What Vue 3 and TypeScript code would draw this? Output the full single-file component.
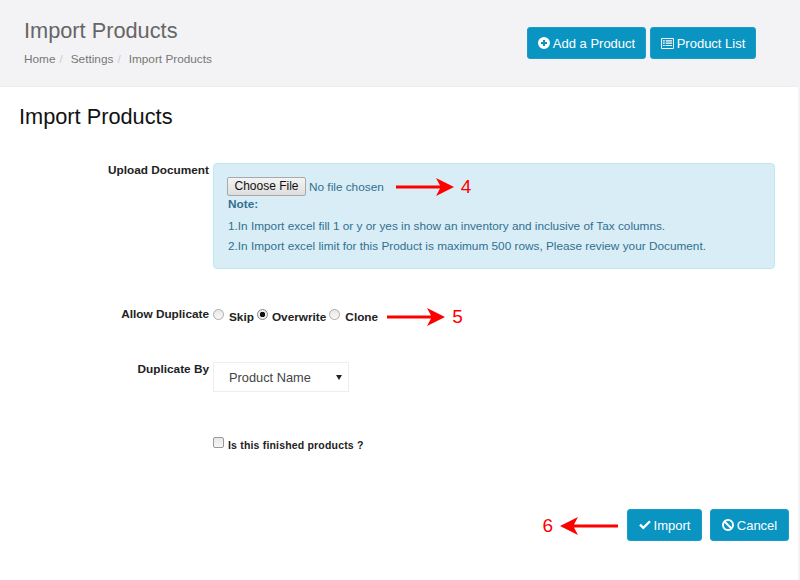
<script setup lang="ts">
const crumbs: string[] = ['Home', 'Settings', 'Import Products']
const options = [
  { label: 'Skip', checked: false },
  { label: 'Overwrite', checked: true },
  { label: 'Clone', checked: false },
]
</script>

<template>
  <div class="page">
    <header class="top">
      <div class="top-left">
        <h1>Import Products</h1>
        <nav class="crumbs">
          <span v-for="(c, i) in crumbs" :key="c" class="crumb">
            {{ c }}<i v-if="i < crumbs.length - 1" class="sep">/</i>
          </span>
        </nav>
      </div>
      <div class="top-actions">
        <button class="btn add">
          <svg viewBox="0 0 12 12" width="12" height="12"><path fill="#fff" fill-rule="evenodd" d="M6 0a6 6 0 1 1 0 12A6 6 0 0 1 6 0zM5 3v2H3v2h2v2h2V7h2V5H7V3z"/></svg>
          Add a Product
        </button>
        <button class="btn list">
          <svg viewBox="0 0 14 12" width="13" height="11"><path fill="#fff" fill-rule="evenodd" d="M1 0h12a1 1 0 0 1 1 1v10a1 1 0 0 1-1 1H1a1 1 0 0 1-1-1V1a1 1 0 0 1 1-1zm0 1.200v9.600h12V1.200zM2 2.500h2v1.300H2zm3 0h7v1.300H5zM2 5h2v1.300H2zm3 0h7v1.300H5zM2 7.500h2v1.300H2zm3 0h7v1.300H5z"/></svg>
          Product List
        </button>
      </div>
    </header>

    <main class="panel">
      <h2>Import Products</h2>

      <div class="row upload-row">
        <label class="lbl">Upload Document</label>
        <div class="alert">
          <div class="file">
            <span class="file-btn">Choose File</span>
            <span class="file-txt">No file chosen</span>
            <svg class="arrow a4" viewBox="0 0 58 20" width="58" height="20"><path fill="#f00" d="M0 8.500h44L40 1l18 9-18 9 4-7.500H0z"/></svg>
            <span class="num">4</span>
          </div>
          <div class="note">Note:</div>
          <p>1.In Import excel fill 1 or y or yes in show an inventory and inclusive of Tax columns.</p>
          <p>2.In Import excel limit for this Product is maximum 500 rows, Please review your Document.</p>
        </div>
      </div>

      <div class="row dup-row">
        <label class="lbl">Allow Duplicate</label>
        <div class="radios">
          <span v-for="o in options" :key="o.label" class="radio-item">
            <span class="radio" :class="{ on: o.checked }"></span>
            <b>{{ o.label }}</b>
          </span>
          <svg class="arrow a5" viewBox="0 0 58 20" width="58" height="20"><path fill="#f00" d="M0 8.500h44L40 1l18 9-18 9 4-7.500H0z"/></svg>
          <span class="num n5">5</span>
        </div>
      </div>

      <div class="row by-row">
        <label class="lbl">Duplicate By</label>
        <div class="select"><span class="sel-txt">Product Name</span><span class="caret"></span></div>
      </div>

      <div class="row check-row">
        <span></span>
        <div class="check-wrap"><span class="check"></span><b>Is this finished products ?</b></div>
      </div>

      <footer class="foot">
        <span class="num n6">6</span>
        <svg class="arrow a6" viewBox="0 0 58 20" width="58" height="20"><path fill="#f00" d="M58 8.500H14L18 1 0 10l18 9-4-7.500h44z"/></svg>
        <button class="btn import">
          <svg viewBox="0 0 14 12" width="12" height="10"><path fill="#fff" d="M5 11.500 0 6.500 2 4.500 5 7.500 12 .5l2 2z"/></svg>
          Import
        </button>
        <button class="btn cancel">
          <svg viewBox="0 0 12 12" width="12" height="12"><circle cx="6" cy="6" r="5" fill="none" stroke="#fff" stroke-width="2"/><path stroke="#fff" stroke-width="2" d="M2.500 2.500l7 7"/></svg>
          Cancel
        </button>
      </footer>
    </main>
  </div>
</template>

<style>
html, body { margin: 0; background: #f3f3f5; }
</style>

<style scoped>
.page { width: 800px; height: 580px; overflow: hidden; font-family: "Liberation Sans", Arial, sans-serif; color: #333; }
.top { height: 86px; box-sizing: border-box; display: flex; justify-content: space-between; padding: 27px 44px 0 24px; background: #f3f3f5; }
.top-left { margin-top: -9px; }
h1 { margin: 0; font-size: 21.750px; line-height: 26px; font-weight: 400; color: #666; }
.crumbs { margin-top: 8px; font-size: 11.800px; line-height: 14px; color: #777; display: flex; }
.crumb { margin-right: 8px; }
.sep { font-style: normal; color: #ccc; margin-left: 4px; }
.top-actions { display: flex; gap: 4px; align-items: flex-start; }
.btn { box-sizing: border-box; height: 32px; background: #0a94c2; border: 1px solid #1a9cc8; border-radius: 3px; color: #fff; font: 13px "Liberation Sans", Arial, sans-serif; display: inline-flex; align-items: center; justify-content: center; gap: 3px; padding: 0; }
.add { width: 119px; }
.list { width: 106px; }
.import { width: 75px; }
.cancel { width: 79px; margin-left: 8px; }
.panel { width: 798px; height: 494px; background: #fff; box-sizing: border-box; padding: 17px 9px 0 19px; border-top: 1px solid #eee; }
h2 { margin: 0; font-size: 21.750px; line-height: 26px; font-weight: 400; color: #111; }
.row { display: grid; grid-template-columns: 190px 1fr; column-gap: 4px; }
.lbl { font-size: 11.800px; font-weight: 700; color: #222; text-align: right; line-height: 14px; }
.upload-row { margin-top: 33px; }
.alert { width: 562px; height: 106px; box-sizing: border-box; background: #d9edf7; border: 1px solid #bce8f1; border-radius: 4px; padding: 13px 14px 0; color: #31708f; font-size: 11.800px; }
.file { display: flex; align-items: center; height: 19px; }
.file-btn { box-sizing: border-box; width: 79px; height: 19px; margin-left: -1px; background: linear-gradient(#f4f4f4, #dedede); border: 1px solid #a9a9a9; border-radius: 2px; color: #111; font-size: 12px; line-height: 17px; text-align: center; }
.file-txt { margin-left: 3px; }
.arrow { flex: none; }
.a4 { margin-left: 12px; }
.num { color: #f00; font-size: 19px; line-height: 20px; }
.file .num { margin-left: 7px; }
.note { font-weight: 700; line-height: 14px; margin-top: 1px; }
.alert p { margin: 6px 0 0; line-height: 14px; }
.alert .note + p { margin-top: 8px; }
.dup-row { margin-top: 38px; }
.radios { display: flex; align-items: center; height: 20px; font-size: 11.800px; color: #222; margin-top: -3px; }
.radio-item { display: inline-flex; align-items: center; margin-right: 3px; }
.radio-item b { margin-left: 5px; margin-top: 5px; }
.radio { width: 11px; height: 11px; box-sizing: border-box; border-radius: 50%; border: 1px solid #aaa; background: linear-gradient(#e8e8e8, #f8f8f8); }
.radio.on { background: radial-gradient(circle, #111 0 2.500px, #eee 3px); border-color: #888; margin-right: -1px; }
.a5 { margin-left: 6px; margin-top: 6px; }
.n5 { margin-left: 7px; margin-top: 6px; }
.by-row { margin-top: 38px; }
.select { width: 136px; height: 30px; box-sizing: border-box; background: #fff; border: 1px solid #eee; padding: 1px 6px 0 15px; font-size: 12.800px; color: #444; display: flex; justify-content: space-between; align-items: center; }
.caret { width: 0; height: 0; border-left: 3px solid transparent; border-right: 3px solid transparent; border-top: 5px solid #222; }
.check-row { margin-top: 45px; }
.check-wrap { display: flex; align-items: flex-start; font-size: 10.500px; line-height: 12px; color: #222; letter-spacing: .18px; }
.check-wrap b { margin-top: 2px; }
.check { width: 11px; height: 11px; box-sizing: border-box; border: 1px solid #999; border-radius: 2px; background: linear-gradient(#e8e8e8, #f6f6f6); margin-right: 4px; }
.foot { display: flex; justify-content: flex-end; align-items: center; margin-top: 58px; }
.n6 { margin-right: 7px; margin-top: 1px; }
.a6 { margin-right: 9px; margin-top: 1px; }
</style>
